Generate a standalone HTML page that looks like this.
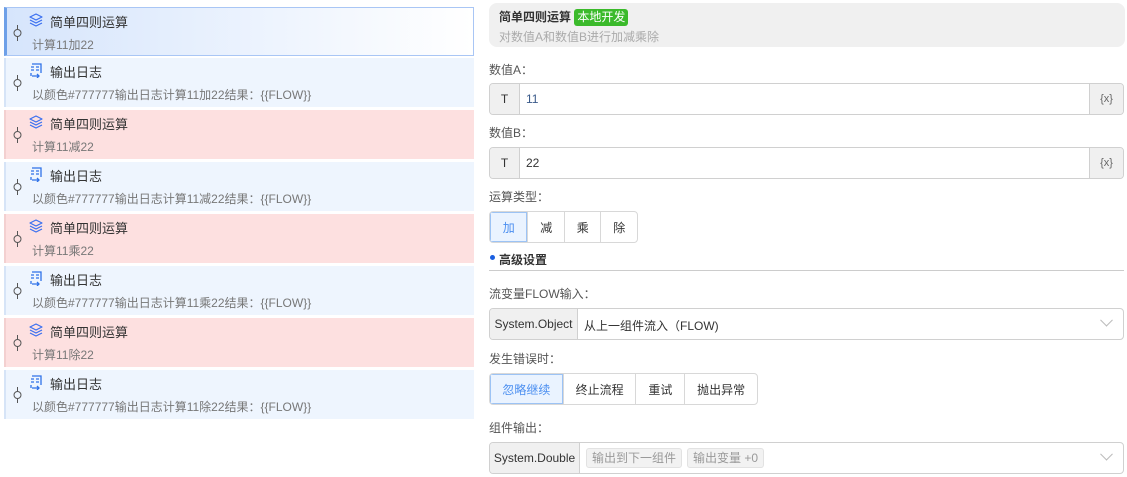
<!DOCTYPE html><html><head><meta charset="utf-8"><style>
*{box-sizing:border-box;margin:0;padding:0}
body{width:1127px;height:477px;background:#fff;font-family:"Liberation Sans","Noto Sans CJK SC",sans-serif;font-size:12px;color:#333;position:relative;overflow:hidden}
.it{position:absolute;left:4px;width:470px;height:49px;border-left:2px solid #d6e4f7}
.it.sel{background:linear-gradient(90deg,#d6e5fc,#fff);border:1px solid #a9c6f5;border-left:3px solid #6ea0e8}
.it.log{background:#eef5fe}
.it.red{background:#fde0e0;border-left-color:#f3d0d0}
.pin{position:absolute;left:7px;top:17px;width:9px;height:16px}
.ic{position:absolute;left:22px;top:4px;width:16px;height:16px}
.t{position:absolute;left:44px;top:4px;font-size:13px;color:#333}
.s{position:absolute;left:26px;top:28px;font-size:12px;color:#777}
.sel .pin{left:6px}.sel .ic{left:21px}.sel .t{left:43px}.sel .s{left:25px}
.abs{position:absolute}
.lbl{position:absolute;left:489px;font-size:12px;color:#555}
.inp{position:absolute;left:489px;width:635px;height:32px;border:1px solid #d0d0d0;border-radius:4px;overflow:hidden;background:#fff}
.pre{position:absolute;left:0;top:0;bottom:0;background:#f0f0f0;border-right:1px solid #d0d0d0;display:flex;align-items:center;justify-content:center;color:#333}
.btns{position:absolute;left:489px;height:32px;display:flex;border:1px solid #d8d8d8;border-radius:4px;overflow:hidden}
.btns div{border-left:1px solid #d8d8d8;display:flex;align-items:center;justify-content:center;color:#333;font-size:12px}
.btns div:first-child{border-left:none;background:#eaf3ff;color:#4a8ef0;outline:1px solid #9cc3f5;outline-offset:-1px}
.chev{position:absolute;right:12px;top:11px;width:9px;height:9px;border-right:1px solid #bbb;border-bottom:1px solid #bbb;transform:rotate(45deg) translate(-3px,-3px)}
.tag{display:inline-block;background:#f2f2f2;border:1px solid #e2e2e2;border-radius:3px;color:#999;padding:0 5px;height:20px;line-height:18px;margin-right:5px}
</style></head><body>
<svg width="0" height="0" style="position:absolute"><defs>
<symbol id="pin" viewBox="0 0 9 16"><line x1="4.5" y1="0" x2="4.5" y2="4" stroke="#555"/><circle cx="4.5" cy="8" r="3.5" fill="none" stroke="#555"/><line x1="4.5" y1="11.5" x2="4.5" y2="16" stroke="#555"/></symbol>
<symbol id="lay" viewBox="0 0 16 16"><path d="M8 2L14 5L8 8L2 5Z M2 8L8 11L14 8 M2 11L8 14L14 11" fill="none" stroke="#3a6ff0" stroke-width="1.2" stroke-linejoin="round"/></symbol>
<symbol id="log" viewBox="0 0 16 16"><path d="M4 2H13V11 M3 5H6 M3 8H6 M8 5H11 M8 8H11 M4 14H11 M9 12L11 14L9 16 M3 11V14" fill="none" stroke="#2f72e8" stroke-width="1.3"/></symbol>
</defs></svg>

<div class="it sel" style="top:7px;height:49px"><svg class="pin"><use href="#pin"/></svg><svg class="ic"><use href="#lay"/></svg><div class="t">简单四则运算</div><div class="s">计算11加22</div></div>
<div class="it log" style="top:58px"><svg class="pin"><use href="#pin"/></svg><svg class="ic"><use href="#log"/></svg><div class="t">输出日志</div><div class="s">以颜色#777777输出日志计算11加22结果：{{FLOW}}</div></div>
<div class="it red" style="top:110px"><svg class="pin"><use href="#pin"/></svg><svg class="ic"><use href="#lay"/></svg><div class="t">简单四则运算</div><div class="s">计算11减22</div></div>
<div class="it log" style="top:162px"><svg class="pin"><use href="#pin"/></svg><svg class="ic"><use href="#log"/></svg><div class="t">输出日志</div><div class="s">以颜色#777777输出日志计算11减22结果：{{FLOW}}</div></div>
<div class="it red" style="top:214px"><svg class="pin"><use href="#pin"/></svg><svg class="ic"><use href="#lay"/></svg><div class="t">简单四则运算</div><div class="s">计算11乘22</div></div>
<div class="it log" style="top:266px"><svg class="pin"><use href="#pin"/></svg><svg class="ic"><use href="#log"/></svg><div class="t">输出日志</div><div class="s">以颜色#777777输出日志计算11乘22结果：{{FLOW}}</div></div>
<div class="it red" style="top:318px"><svg class="pin"><use href="#pin"/></svg><svg class="ic"><use href="#lay"/></svg><div class="t">简单四则运算</div><div class="s">计算11除22</div></div>
<div class="it log" style="top:370px"><svg class="pin"><use href="#pin"/></svg><svg class="ic"><use href="#log"/></svg><div class="t">输出日志</div><div class="s">以颜色#777777输出日志计算11除22结果：{{FLOW}}</div></div>

<div class="abs" style="left:489px;top:3px;width:636px;height:44px;background:#f0f0f0;border-radius:8px">
<div class="abs" style="left:10px;top:5px;font-weight:bold;font-size:12px;color:#333">简单四则运算 <span style="background:#3bba2b;color:#fff;font-weight:normal;border-radius:3px;padding:0 3px;display:inline-block;height:17px;line-height:17px">本地开发</span></div>
<div class="abs" style="left:10px;top:25px;color:#aaa">对数值A和数值B进行加减乘除</div></div>

<div class="lbl" style="top:61px">数值A：</div>
<div class="inp" style="top:83px"><div class="pre" style="width:30px">T</div><div class="abs" style="left:36px;top:8px;color:#3a5a8a">11</div><div class="pre" style="left:auto;right:0;width:34px;border-right:none;border-left:1px solid #d0d0d0;color:#666;font-size:11px">{x}</div></div>
<div class="lbl" style="top:124px">数值B：</div>
<div class="inp" style="top:147px"><div class="pre" style="width:30px">T</div><div class="abs" style="left:36px;top:8px;color:#333">22</div><div class="pre" style="left:auto;right:0;width:34px;border-right:none;border-left:1px solid #d0d0d0;color:#666;font-size:11px">{x}</div></div>
<div class="lbl" style="top:188px">运算类型：</div>
<div class="btns" style="top:211px;width:149px"><div style="width:38px">加</div><div style="width:37px">减</div><div style="width:37px">乘</div><div style="width:37px">除</div></div>

<div class="abs" style="left:490px;top:255px;width:5px;height:5px;border-radius:50%;background:#1a5fe0"></div>
<div class="abs" style="left:499px;top:251px;font-weight:bold;color:#333">高级设置</div>
<div class="abs" style="left:489px;top:270px;width:635px;height:1px;background:#ccc"></div>

<div class="lbl" style="top:285px">流变量FLOW输入：</div>
<div class="inp" style="top:308px"><div class="pre" style="width:88px">System.Object</div><div class="abs" style="left:94px;top:8px">从上一组件流入（FLOW)</div><div class="chev"></div></div>
<div class="lbl" style="top:350px">发生错误时：</div>
<div class="btns" style="top:373px;width:269px"><div style="width:73px">忽略继续</div><div style="width:73px">终止流程</div><div style="width:49px">重试</div><div style="width:73px">抛出异常</div></div>
<div class="lbl" style="top:419px">组件输出：</div>
<div class="inp" style="top:442px"><div class="pre" style="width:90px">System.Double</div><div class="abs" style="left:96px;top:5px"><span class="tag">输出到下一组件</span><span class="tag">输出变量 +0</span></div><div class="chev"></div></div>
</body></html>
